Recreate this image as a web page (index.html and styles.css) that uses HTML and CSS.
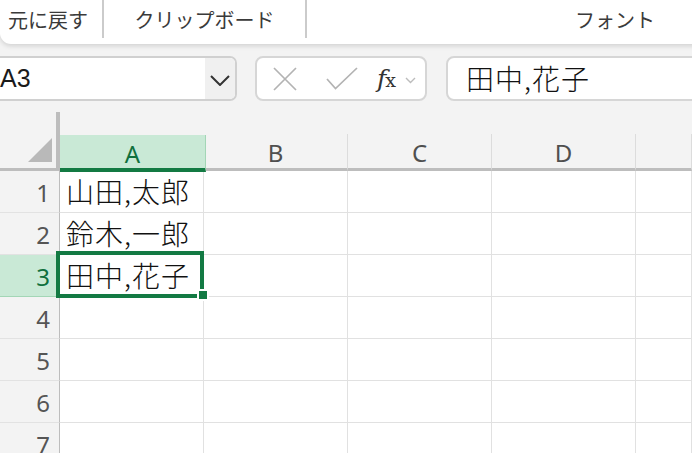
FILE: index.html
```html
<!DOCTYPE html>
<html lang="ja">
<head>
    <meta charset="UTF-8">
    <meta name="viewport" content="width=device-width, initial-scale=1.0">
    <title>Book1</title>
    <link rel="stylesheet" href="styles.css">
</head>
<body>
    <div class="ribbon">
        <div class="group undo">元に戻す</div>
        <div class="sep"></div>
        <div class="group clip">クリップボード</div>
        <div class="sep"></div>
        <div class="group font">フォント</div>
    </div>

    <div class="formula-bar">
        <div class="name-box">
            <span class="name">A3</span>
            <span class="name-drop">
                <svg width="20" height="11" viewBox="0 0 20 11"><path d="M1 1 L10 10 L19 1" fill="none" stroke="#333" stroke-width="2"/></svg>
            </span>
        </div>
        <div class="fx-buttons">
            <svg class="btn-cancel" width="24" height="24" viewBox="0 0 24 24"><path d="M1 1 L23 23 M23 1 L1 23" stroke="#b3b3b3" stroke-width="1.7"/></svg>
            <svg class="btn-enter" width="32" height="24" viewBox="0 0 32 24"><path d="M1 12 L9.5 21.5 L31 1" fill="none" stroke="#b3b3b3" stroke-width="1.7"/></svg>
            <span class="fx"><i>f</i>x</span>
            <svg class="btn-more" width="11" height="7" viewBox="0 0 11 7"><path d="M1 1 L5.5 5.5 L10 1" fill="none" stroke="#bcbcbc" stroke-width="1.4"/></svg>
        </div>
        <div class="formula-input">田中,花子</div>
    </div>

    <div class="sheet">
        <div class="corner">
            <svg width="24" height="24" viewBox="0 0 24 24"><polygon points="24,0 24,24 0,24" fill="#b9b9b9"/></svg>
        </div>
        <div class="col-head active">A</div>
        <div class="col-head">B</div>
        <div class="col-head">C</div>
        <div class="col-head">D</div>
        <div class="col-head"></div>

        <div class="row-head">1</div>
        <div class="cell">山田,太郎</div><div class="cell"></div><div class="cell"></div><div class="cell"></div><div class="cell"></div>

        <div class="row-head">2</div>
        <div class="cell">鈴木,一郎</div><div class="cell"></div><div class="cell"></div><div class="cell"></div><div class="cell"></div>

        <div class="row-head active">3</div>
        <div class="cell current">田中,花子<div class="selection"><span class="handle"></span></div></div><div class="cell"></div><div class="cell"></div><div class="cell"></div><div class="cell"></div>

        <div class="row-head">4</div>
        <div class="cell"></div><div class="cell"></div><div class="cell"></div><div class="cell"></div><div class="cell"></div>

        <div class="row-head">5</div>
        <div class="cell"></div><div class="cell"></div><div class="cell"></div><div class="cell"></div><div class="cell"></div>

        <div class="row-head">6</div>
        <div class="cell"></div><div class="cell"></div><div class="cell"></div><div class="cell"></div><div class="cell"></div>

        <div class="row-head">7</div>
        <div class="cell"></div><div class="cell"></div><div class="cell"></div><div class="cell"></div><div class="cell"></div>
    </div>
</body>
</html>
```

FILE: styles.css
```css
html, body {
    margin: 0;
    padding: 0;
}
body {
    width: 692px;
    height: 453px;
    overflow: hidden;
    background-color: #f3f3f3;
    font-family: "Noto Sans", "Noto Sans CJK JP", sans-serif;
    color: #222;
}

/* ribbon */
.ribbon {
    display: flex;
    align-items: flex-start;
    height: 44px;
    width: 1000px;
    background: #fff;
    border-radius: 0 0 0 11px;
    box-shadow: 0 2px 5px rgba(0, 0, 0, 0.14);
}
.group {
    flex: none;
    height: 40px;
    line-height: 40px;
    font-family: "Noto Sans CJK JP", sans-serif;
    font-size: 20px;
    color: #3a3a3a;
    white-space: nowrap;
}
.undo {
    width: 94px;
    padding-left: 8px;
}
.clip {
    width: 201px;
    text-align: center;
}
.font {
    width: 616px;
    text-align: center;
}
.sep {
    flex: none;
    width: 2px;
    height: 38px;
    background: #cbcbcb;
}

/* formula bar */
.formula-bar {
    display: flex;
    height: 45px;
    margin-top: 12px;
}
.name-box {
    display: flex;
    width: 245px;
    margin-left: -8px;
    box-sizing: border-box;
    background: #fff;
    border: 2px solid #d0d0d0;
    border-radius: 7px;
    overflow: hidden;
}
.name {
    flex: 1;
    padding-left: 6px;
    font-family: "Liberation Sans", Arial, sans-serif;
    font-size: 25px;
    line-height: 41px;
    color: #1a1a1a;
}
.name-drop {
    width: 30px;
    display: flex;
    align-items: center;
    justify-content: center;
    background: #f0f0f0;
    padding-top: 3px;
}
.fx-buttons {
    display: flex;
    align-items: center;
    width: 172px;
    margin-left: 18px;
    box-sizing: border-box;
    padding-left: 16px;
    background: #fff;
    border: 2px solid #d6d6d6;
    border-radius: 8px;
}
.btn-enter {
    margin-left: 29px;
    margin-top: 1px;
}
.fx {
    margin-left: 19px;
    font-family: "DejaVu Serif", serif;
    font-size: 19px;
    color: #333;
    letter-spacing: -1px;
}
.fx i {
    font-size: 25px;
}
.btn-more {
    margin-left: 10px;
    margin-top: 3px;
}
.formula-input {
    flex: 1;
    margin-left: 19px;
    margin-right: -20px;
    padding-left: 18px;
    background: #fff;
    border: 2px solid #d6d6d6;
    border-radius: 8px;
    font-family: "Noto Sans CJK JP", sans-serif;
    font-size: 28px;
    font-weight: 300;
    letter-spacing: 1px;
    line-height: 40px;
    color: #111;
}

/* grid */
.sheet {
    display: grid;
    grid-template-columns: 60px repeat(4, 144px) 1fr;
    grid-template-rows: 59px repeat(7, 42px);
    margin-top: 11px;
}
.corner {
    display: flex;
    justify-content: flex-end;
    align-items: flex-end;
    padding: 0 4px 6px 0;
    border-right: 4px solid #bdbdbd;
    border-bottom: 3px solid #bdbdbd;
}
.col-head {
    align-self: end;
    height: 37px;
    box-sizing: border-box;
    padding-top: 4px;
    text-align: center;
    font-size: 24px;
    line-height: 30px;
    color: #4f4f4f;
    border-right: 1px solid #dcdcdc;
    border-bottom: 3px solid #bdbdbd;
}
.col-head.active {
    background: #c9e9d6;
    color: #10703d;
    border-right-color: #a3d6b6;
    border-bottom: 4px solid #137a43;
    margin-bottom: -1px;
    margin-right: -2px;
    position: relative;
}
.row-head {
    box-sizing: border-box;
    padding-right: 9px;
    padding-top: 2px;
    text-align: right;
    font-size: 24px;
    line-height: 40px;
    color: #555;
    border-right: 1px solid #bdbdbd;
    border-bottom: 1px solid #e2e2e2;
}
.row-head.active {
    background: #c9e9d6;
    color: #10703d;
    border-bottom-color: #a3d6b6;
}
.cell {
    box-sizing: border-box;
    padding-left: 6px;
    background: #fff;
    font-family: "Noto Sans CJK JP", sans-serif;
    font-size: 28px;
    font-weight: 300;
    letter-spacing: 1px;
    line-height: 41px;
    color: #111;
    white-space: nowrap;
    border-right: 1px solid #e1e1e1;
    border-bottom: 1px solid #e1e1e1;
}
.cell.current {
    position: relative;
}
.selection {
    position: absolute;
    left: -4px;
    top: -4px;
    right: -1px;
    bottom: -2px;
    border: 4px solid #137a43;
}
.handle {
    position: absolute;
    right: -9px;
    bottom: -7px;
    width: 8px;
    height: 8px;
    background: #137a43;
    border: 2px solid #fff;
}
```
